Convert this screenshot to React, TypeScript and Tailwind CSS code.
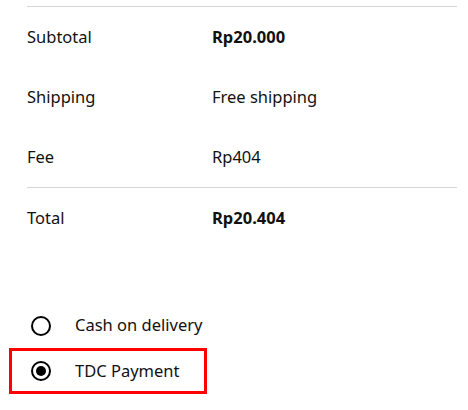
import React, { useState } from 'react';

const rows = [
  { label: 'Subtotal', value: 'Rp20.000', bold: true },
  { label: 'Shipping', value: 'Free shipping', bold: false },
  { label: 'Fee', value: 'Rp404', bold: false },
];

const methods = [
  { id: 'cod', label: 'Cash on delivery' },
  { id: 'tdc', label: 'TDC Payment' },
];

export default function App() {
  const [method, setMethod] = useState('tdc');

  return (
    <div className="min-h-screen bg-white text-[16.5px] text-[#111] font-['Noto_Sans',sans-serif]">
      {/* Totals */}
      <div className="pt-[6px] pl-[27px] w-[457px]">
        <div className="border-t border-[#d6d6d6]">
          {rows.map((r) => (
            <div key={r.label} className="flex items-center h-[60px]">
              <div className="w-[185px]">{r.label}</div>
              <div className={r.bold ? 'font-bold' : ''}>{r.value}</div>
            </div>
          ))}
        </div>
        <div className="border-t border-[#d6d6d6] flex items-center h-[61px]">
          <div className="w-[185px]">Total</div>
          <div className="font-bold">Rp20.404</div>
        </div>
      </div>

      {/* Payment methods */}
      <div className="mt-[55px] ml-[9px] flex flex-col">
        {methods.map((m) => {
          const active = method === m.id;
          return (
            <button
              key={m.id}
              onClick={() => setMethod(m.id)}
              className={
                active
                  ? 'w-[198px] h-[46px] flex items-center pl-[19px] border-[3px] border-[#ff0000] text-left'
                  : 'w-[198px] h-[45px] flex items-center pl-[22px] text-left'
              }
            >
              <span className="w-[20px] h-[20px] rounded-full border-2 border-black flex items-center justify-center shrink-0">
                {active && <span className="w-[10px] h-[10px] rounded-full bg-black" />}
              </span>
              <span className="ml-[24px]">{m.label}</span>
            </button>
          );
        })}
      </div>
    </div>
  );
}
